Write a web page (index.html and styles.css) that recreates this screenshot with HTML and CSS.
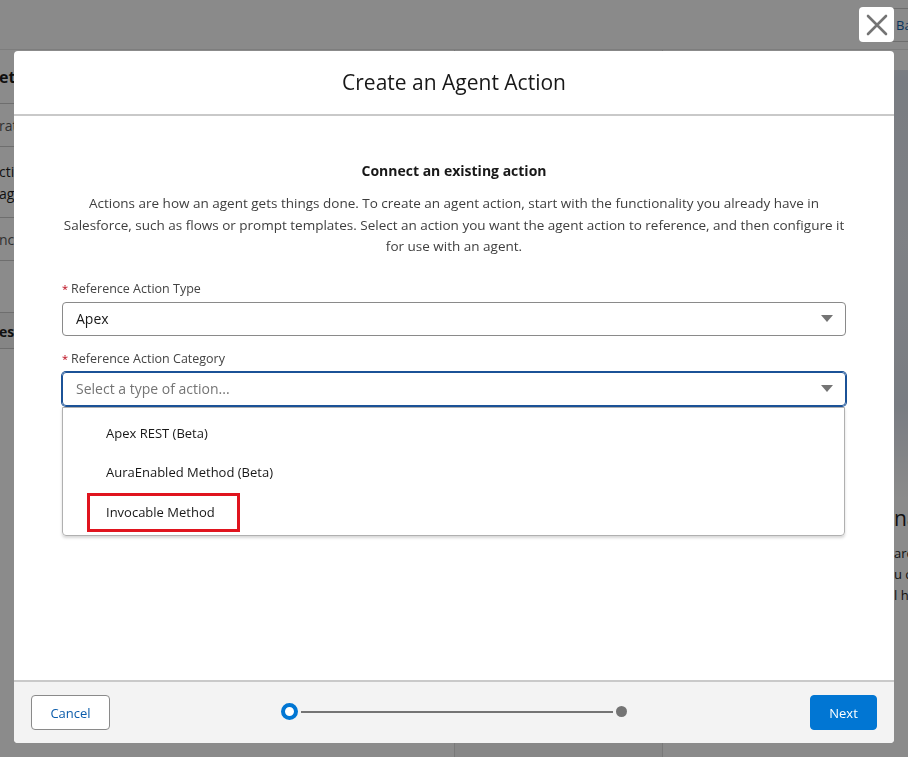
FILE: index.html
```html
<!DOCTYPE html>
<html lang="en">
<head>
  <meta charset="UTF-8">
  <title>Create an Agent Action</title>
  <link rel="stylesheet" href="styles.css">
</head>
<body>
  <div class="page">
    <header class="topbar">
      <a class="top-btn" href="#">Back to Setup</a>
    </header>
    <div class="workspace">
      <aside class="side-left">
        <div class="row row-title">etails</div>
        <div class="row row-muted">ration</div>
        <div class="row row-double">ction<br>age</div>
        <div class="row row-muted">nction</div>
        <div class="row row-gap"></div>
        <div class="row row-section">escription</div>
      </aside>
      <main class="canvas"></main>
      <aside class="side-right">
        <div class="art"></div>
        <h2>nage</h2>
        <p>arch<br>u can<br>l help</p>
      </aside>
    </div>
  </div>

  <div class="backdrop"></div>

  <button class="modal-close" title="Close">
    <svg width="22" height="22" viewBox="0 0 22 22">
      <path d="M2 2 L20 20 M20 2 L2 20" stroke="#747474" stroke-width="2.6" stroke-linecap="round" fill="none"/>
    </svg>
  </button>

  <section class="modal">
    <div class="modal-header">
      <h1>Create an Agent Action</h1>
    </div>

    <div class="modal-body">
      <h3>Connect an existing action</h3>
      <p class="intro">Actions are how an agent gets things done. To create an agent action, start with the functionality you already have in Salesforce, such as flows or prompt templates. Select an action you want the agent action to reference, and then configure it for use with an agent.</p>

      <div class="field">
        <label><abbr>*</abbr>Reference Action Type</label>
        <div class="combo">
          <span>Apex</span>
          <span class="caret"></span>
        </div>
      </div>

      <div class="field">
        <label><abbr>*</abbr>Reference Action Category</label>
        <div class="combo focused">
          <span class="placeholder">Select a type of action...</span>
          <span class="caret"></span>
        </div>
        <ul class="listbox">
          <li>Apex REST (Beta)</li>
          <li>AuraEnabled Method (Beta)</li>
          <li class="marked"><span>Invocable Method</span></li>
        </ul>
      </div>
    </div>

    <div class="modal-footer">
      <div class="foot-left"><button class="btn-neutral">Cancel</button></div>
      <div class="progress">
        <span class="step-current"></span>
        <span class="step-line"></span>
        <span class="step-next"></span>
      </div>
      <div class="foot-right"><button class="btn-brand">Next</button></div>
    </div>
  </section>
</body>
</html>
```

FILE: styles.css
```css
* {
  box-sizing: border-box;
}

body {
  margin: 0;
  font-family: "Open Sans", "Noto Sans", Arial, sans-serif;
  color: #181818;
  background-color: #fff;
  overflow: hidden;
}

/* page behind the dialog */
.page {
  height: 757px;
  display: grid;
  grid-template-rows: 50px 1fr;
}

.topbar {
  display: flex;
  align-items: center;
  padding-left: 878px;
  background-color: #fdfdfd;
  border-bottom: 1px solid #e5e5e5;
  overflow: hidden;
}

.top-btn {
  white-space: nowrap;
  padding: 7px 0 7px 17px;
  border: 1px solid #c9c9c9;
  border-radius: 4px;
  color: #0b5cab;
  font-size: 13px;
  text-decoration: none;
}

.workspace {
  display: grid;
  grid-template-columns: 455px 208px 1fr;
}

.side-left {
  background-color: #fff;
  border-right: 1px solid #ddd;
  overflow: hidden;
}

.row {
  border-bottom: 1px solid #c9c9c9;
  font-size: 14px;
  color: #181818;
  margin-left: -1px;
}

.row-title {
  height: 54px;
  line-height: 54px;
  font-weight: 700;
  font-size: 16px;
}

.row-muted {
  height: 43px;
  line-height: 43px;
  color: #555;
}

.row-double {
  height: 71px;
  padding-top: 14px;
  line-height: 22px;
}

.row-muted + .row-gap {
  height: 51px;
  border-bottom: none;
}

.row-section {
  height: 37px;
  line-height: 37px;
  font-weight: 700;
  background-color: #f3f3f3;
  border-top: 1px solid #c9c9c9;
}

.canvas {
  background-color: #f8f8f8;
  border-right: 1px solid #ddd;
}

.side-right {
  background-color: #fff;
  padding-left: 231px;
  overflow: hidden;
}

.art {
  height: 430px;
  margin: 20px 0 0 -231px;
  background: radial-gradient(ellipse at 100% 40%, #e8ecf3 0%, #dde3ee 45%, #fff 70%);
}

.side-right h2 {
  margin: 0;
  font-size: 21px;
  font-weight: 400;
  line-height: 36px;
  white-space: nowrap;
}

.side-right p {
  margin: 7px 0 0;
  font-size: 13px;
  line-height: 21px;
  white-space: nowrap;
}

.backdrop {
  position: fixed;
  inset: 0;
  background-color: rgba(8, 8, 8, 0.47);
}

/* dialog */
.modal-close {
  position: fixed;
  left: 859px;
  top: 7px;
  width: 35px;
  height: 35px;
  padding: 0;
  border: none;
  border-radius: 4px;
  background-color: #fff;
  display: flex;
  align-items: center;
  justify-content: center;
  cursor: pointer;
}

.modal {
  position: fixed;
  left: 14px;
  top: 51px;
  width: 880px;
  height: 692px;
  background-color: #fff;
  border-radius: 4px;
  display: flex;
  flex-direction: column;
  overflow: hidden;
}

.modal-header {
  height: 65px;
  border-bottom: 2px solid #c9c9c9;
  display: flex;
  align-items: center;
  justify-content: center;
}

.modal-header h1 {
  margin: 0 0 1px;
  font-size: 21px;
  font-weight: 400;
  color: #181818;
}

.modal-body {
  flex: 1;
  padding: 45px 48px 0;
}

.modal-body h3 {
  margin: 0;
  text-align: center;
  font-size: 14px;
  line-height: 20px;
  font-weight: 700;
}

.intro {
  margin: 12px 0 0;
  text-align: center;
  font-size: 13.5px;
  line-height: 21.6px;
  color: #3e3e3e;
}

.field {
  margin-top: 22px;
}

.field + .field {
  margin-top: 14px;
}

.field label {
  display: block;
  font-size: 12.5px;
  line-height: 18px;
  color: #444;
  margin-bottom: 4px;
}

.field abbr {
  color: #ba0517;
  margin-right: 3px;
  font-size: 11px;
  text-decoration: none;
}

.combo {
  height: 34px;
  padding: 0 12px 0 13px;
  border: 1px solid #8a8a8a;
  border-radius: 4px;
  display: flex;
  align-items: center;
  justify-content: space-between;
  font-size: 14px;
  color: #181818;
}

.combo.focused {
  border-color: #1b5297;
  box-shadow: 0 0 0 1px #1b5297;
}

.placeholder {
  color: #747474;
}

.caret {
  width: 0;
  height: 0;
  border-left: 6px solid transparent;
  border-right: 6px solid transparent;
  border-top: 7px solid #747474;
}

.listbox {
  list-style: none;
  margin: 1px 1px 0 0;
  padding: 6px 0 3px;
  border: 1px solid #b0b0b0;
  border-radius: 0 0 4px 4px;
  box-shadow: 0 2px 3px rgba(0, 0, 0, 0.16);
  font-size: 13px;
  color: #181818;
}

.listbox li {
  height: 39.5px;
  line-height: 39.5px;
  padding-left: 43px;
}

.listbox li.marked {
  padding-left: 24px;
  line-height: 33px;
}

.listbox li.marked span {
  display: inline-block;
  height: 39px;
  padding: 0 22px 0 16px;
  border: 3px solid #e0141e;
}

.modal-footer {
  height: 63px;
  padding: 0 17px;
  background-color: #f3f3f3;
  border-top: 2px solid #c9c9c9;
  display: grid;
  grid-template-columns: 1fr auto 1fr;
  align-items: center;
}

.foot-right {
  text-align: right;
}

.btn-neutral,
.btn-brand {
  height: 35px;
  padding: 0 16px;
  border-radius: 4px;
  font-family: inherit;
  font-size: 13px;
  cursor: pointer;
}

.btn-neutral {
  width: 79px;
  background-color: #fff;
  border: 1px solid #8a8a8a;
  color: #0b5cab;
}

.btn-brand {
  width: 67px;
  background-color: #0176d3;
  border: 1px solid #0176d3;
  color: #fff;
}

.progress {
  display: flex;
  align-items: center;
  width: 346px;
  margin-top: -2px;
}

.step-current {
  width: 17px;
  height: 17px;
  border: 4px solid #0176d3;
  border-radius: 50%;
  background-color: #fff;
}

.step-line {
  flex: 1;
  height: 2px;
  margin: 0 3px;
  background-color: #747474;
}

.step-next {
  width: 11px;
  height: 11px;
  border-radius: 50%;
  background-color: #747474;
}
```
